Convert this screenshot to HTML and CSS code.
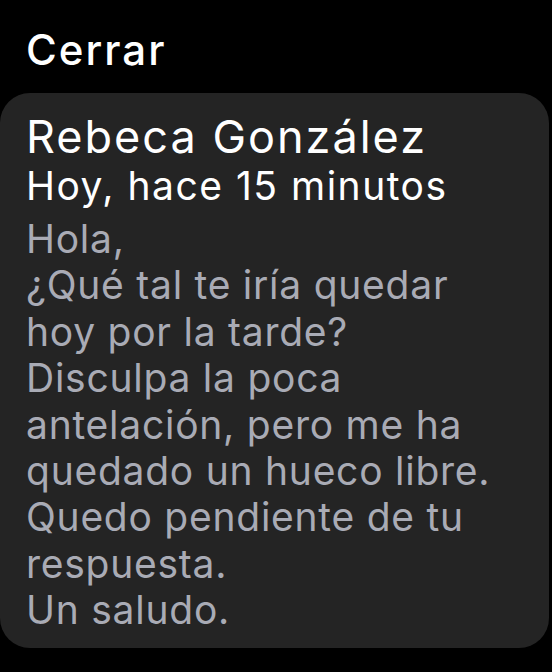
FILE: index.html
```html
<!DOCTYPE html>
<html lang="es">
<head>
<meta charset="utf-8">
<link rel="stylesheet" href="styles.css">
</head>
<body>
<div class="screen">
  <div class="close">Cerrar</div>
  <div class="card">
    <div class="name">Rebeca González</div>
    <div class="time">Hoy, hace 15 minutos</div>
    <div class="msg">Hola,<br>¿Qué tal te iría quedar<br>hoy por la tarde?<br>Disculpa la poca<br>antelación, pero me ha<br>quedado un hueco libre.<br>Quedo pendiente de tu<br>respuesta.<br>Un saludo.</div>
  </div>
</div>
</body>
</html>
```
FILE: styles.css
```css
html, body {
  margin: 0;
  padding: 0;
  background: #000;
}
.screen {
  width: 552px;
  height: 672px;
  overflow: hidden;
  font-family: Inter, "Noto Sans", sans-serif;
  display: flex;
  flex-direction: column;
}
.close {
  color: #fff;
  font-size: 42px;
  font-weight: 500;
  line-height: 46px;
  padding: 27px 0 0 26px;
  letter-spacing: 2px;
}
.card {
  margin-top: 20px;
  width: 549px;
  height: 555px;
  box-sizing: border-box;
  background: #242424;
  border-radius: 30px;
  padding: 19px 0 0 26px;
}
.name {
  color: #fff;
  font-size: 45px;
  line-height: 50px;
  letter-spacing: 2px;
}
.time {
  color: #fff;
  font-size: 39px;
  line-height: 48px;
  letter-spacing: 1.5px;
}
.msg {
  margin-top: 6px;
  color: #a9abb5;
  font-size: 39px;
  line-height: 46.4px;
  letter-spacing: 0.75px;
  white-space: nowrap;
}
```
